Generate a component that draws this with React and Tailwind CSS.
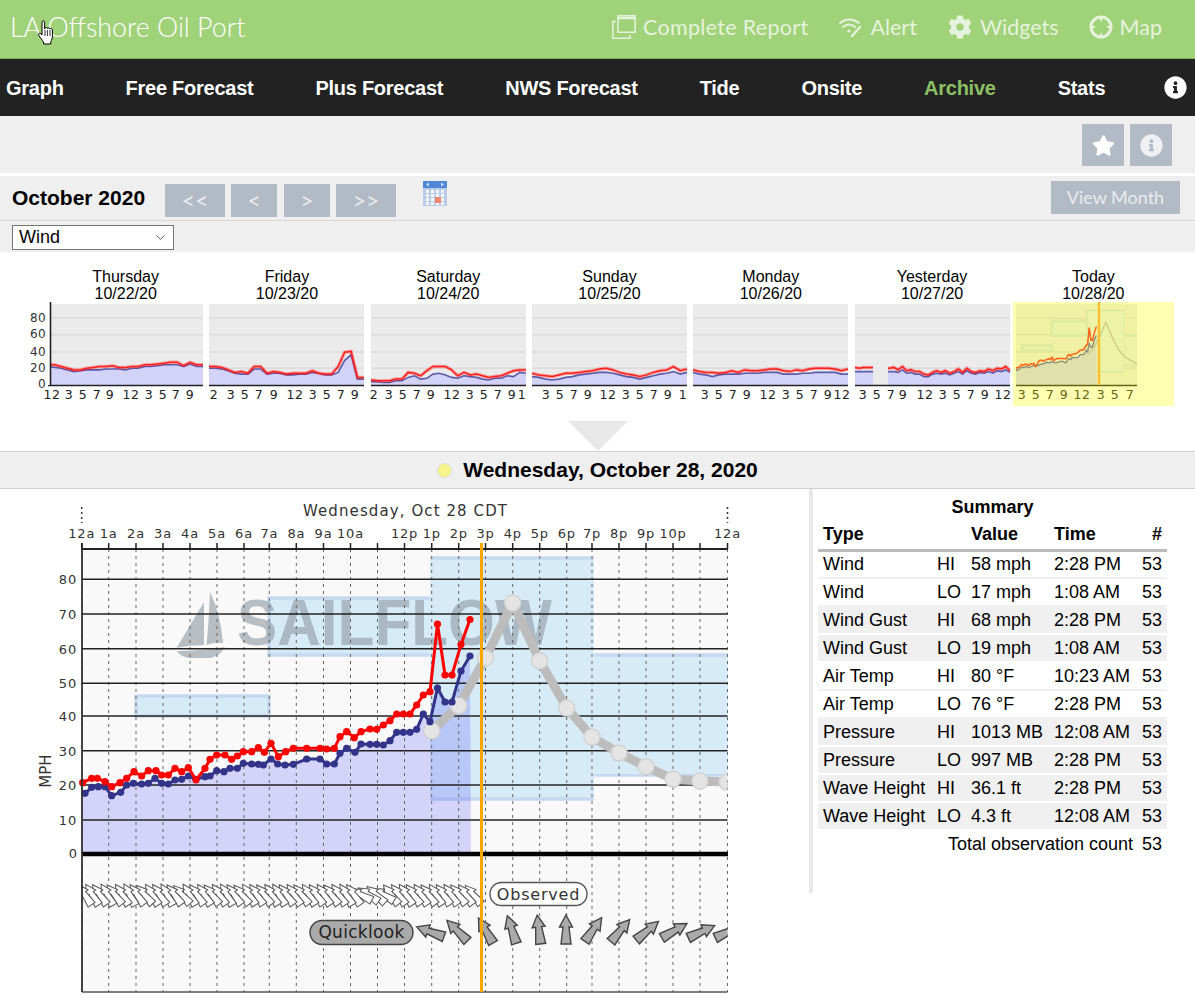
import { ChevronDown } from "lucide-react";
import { FaCog, FaInfoCircle, FaStar } from "react-icons/fa";

const hourX = [81.7, 108.7, 136, 163, 190, 217, 244, 269.3, 296.3, 323.5, 350.5, 377.5, 404.5, 431.7, 458.7, 485.5, 512.7, 539.7, 566.7, 592, 619, 646, 673, 700, 727.5];
const hourLabels = ["12a", "1a", "2a", "3a", "4a", "5a", "6a", "7a", "8a", "9a", "10a", "", "12p", "1p", "2p", "3p", "4p", "5p", "6p", "7p", "8p", "9p", "10p", "", "12a"];
const gridY = [[80, 579.3], [70, 614], [60, 648.7], [50, 683.3], [40, 716], [30, 750.7], [20, 785], [10, 820]];

const fromA = ([x, y]) => [80 + x / 3, 730 + y / 3];
const fromB = ([x, y]) => [255 + x / 3, 690 + y / 3];

const redPts = [
  ...[[8, 158], [35, 145], [52, 145], [75, 155], [95, 170], [120, 158], [140, 145], [162, 125], [185, 138], [205, 122], [228, 122], [245, 135], [265, 135], [285, 115], [305, 125], [325, 113], [348, 150], [375, 115], [390, 88], [410, 75], [435, 75], [455, 88], [472, 78], [490, 65], [515, 65], [535, 53]].map(fromA),
  ...[[28, 187], [48, 160], [70, 200], [92, 185], [115, 175], [155, 175], [195, 175], [215, 177], [238, 175], [255, 140], [275, 125], [298, 143], [318, 125], [345, 117], [365, 118], [385, 105], [405, 92], [425, 72], [445, 72], [465, 72], [485, 45], [505, 15], [525, 5]].map(fromB),
  [437.5, 624], [445, 675], [452, 675], [461, 644.5], [470, 619.5],
];
const bluePts = [
  ...[[15, 190], [35, 172], [55, 170], [75, 170], [95, 197], [122, 187], [140, 165], [160, 160], [185, 162], [205, 160], [225, 145], [245, 160], [265, 162], [285, 150], [305, 148], [325, 138], [348, 148], [375, 140], [390, 138], [410, 122], [432, 125], [450, 115], [472, 115], [490, 100], [515, 102], [535, 103]].map(fromA),
  ...[[25, 225], [48, 207], [68, 222], [90, 225], [115, 223], [155, 207], [195, 207], [215, 222], [238, 222], [255, 190], [275, 175], [300, 187], [318, 162], [345, 163], [365, 163], [385, 165], [405, 152], [425, 127], [445, 127], [465, 127], [485, 118], [505, 72], [525, 95]].map(fromB),
  [437.5, 688], [445, 702], [452, 702], [461, 671], [470, 656],
];
const forecastPts = [[431.7, 731], [458.7, 705.7], [485.5, 658], [512.7, 603], [539.7, 660.7], [566.7, 708], [592, 737], [619, 753], [646, 766.7], [673, 779], [700, 781], [727, 782]];
const blocks = [[136, 696, 133, 20], [269, 598, 163, 57], [269, 655, 0, 41], [432, 558, 160, 241], [592, 655, 135, 120]];

const forecastArrows = [[430.8, 932, -70], [457.5, 931, -45], [486, 931, -30], [512, 930, -18], [539, 930, -7], [566, 930, 0], [593, 930, 35], [620, 931, 40], [647, 931, 50], [674, 931, 60], [701, 932, 65], [728, 932, 65]];
const observedTilt = [-26, -24, -28, -22, -30, -25, -20, -27, -33, -24, -26, -21, -29, -34, -23, -27, -25, -30, -26, -22, -28, -31, -24, -26, -29, -25, -23, -28, -26, -30, -24, -27, -25, -29, -26, -23, -27, -55, -48, -40, -52, -30, -27, -25, -28, -26, -29, -24, -27, -26, -30, -28, -32];

const toPoints = (pts) => pts.map((p) => p.join(",")).join(" ");

const Arrow = ({ x, y, rot, scale = 1, fill, stroke, width = 1.4 }) => (
  <polygon
    transform={`translate(${x} ${y}) rotate(${rot}) scale(${scale})`}
    points="0,-15 6.5,-3 3,-3 5,14 -5,14 -3,-3 -6.5,-3"
    fill={fill}
    stroke={stroke}
    strokeWidth={width}
  />
);

const MainChart = () => (
  <svg width="809" height="504" viewBox="0 489 809 504" className="block" fontFamily="DejaVu Sans">
    <defs>
      <clipPath id="plot-clip">
        <rect x="82" y="549" width="645.5" height="444" />
      </clipPath>
    </defs>
    <rect x="82" y="549" width="645.5" height="443" fill="#f9f9f9" />
    {blocks.map(([x, y, w, h], i) => (
      <rect key={i} x={x} y={y} width={w} height={h} fill="#d7ebf7" stroke="#c6d9ef" strokeWidth="3.5" clipPath="url(#plot-clip)" />
    ))}
    <rect x="592" y="657" width="135" height="117" fill="#d7ebf7" />
    <rect x="430" y="560" width="164" height="237" fill="#d7ebf7" />
    <g opacity="0.62" fill="#8f9ca6">
      <path d="M204 602 L176.7 647.7 Q190 645 204 645 Z" />
      <path d="M210 591.7 Q221 615 223 643 Q214 642 206.5 645 Q209 620 210 591.7 Z" />
      <path d="M176.7 651 Q200 651 225 647 Q220 656 210 658 L190 658 Q181 657 176.7 651 Z" />
      <text x="237" y="645" fontFamily="Liberation Sans" fontWeight="700" fontSize="65" textLength="315" lengthAdjust="spacingAndGlyphs">SAILFLOW</text>
    </g>
    <polygon points={toPoints([[82, 854], [82, bluePts[0][1]], ...bluePts, [471, 854]])} fill="#0000ff" fillOpacity="0.15" />
    {hourX.map((x) => (
      <line key={x} x1={x} x2={x} y1="549" y2="992" stroke="#666" strokeWidth="1" strokeDasharray="3 4" />
    ))}
    {gridY.map(([v, y]) => (
      <line key={v} x1="82" x2="727.5" y1={y} y2={y} stroke="#222" strokeWidth="1.6" />
    ))}
    <g clipPath="url(#plot-clip)">
      <polyline points={toPoints(forecastPts)} fill="none" stroke="#bcbcbc" strokeWidth="9" />
      {forecastPts.map(([x, y]) => (
        <circle key={x} cx={x} cy={y} r="8" fill="#e4e4e4" stroke="#d2d2d2" strokeWidth="1.5" />
      ))}
    </g>
    <polyline points={toPoints(bluePts)} fill="none" stroke="#33338a" strokeWidth="3" />
    {bluePts.map(([x, y], i) => (
      <circle key={i} cx={x} cy={y} r="3.6" fill="#33338a" />
    ))}
    <polyline points={toPoints(redPts)} fill="none" stroke="#ff0000" strokeWidth="3" />
    {redPts.map(([x, y], i) => (
      <circle key={i} cx={x} cy={y} r="3.6" fill="#ff0000" />
    ))}
    <g clipPath="url(#plot-clip)">
      {[...observedTilt].reverse().map((rot, i) => (
        <Arrow key={i} x={85 + (observedTilt.length - 1 - i) * 7.47} y={895} rot={rot - 8} scale={0.84} fill="#fff" stroke="#555" width={1.2} />
      ))}
      {forecastArrows.map(([x, y, rot]) => (
        <Arrow key={x} x={x} y={y} rot={rot} fill="#aaa" stroke="#444" />
      ))}
    </g>
    <line x1="82" x2="728" y1="854" y2="854" stroke="#000" strokeWidth="4.5" />
    <line x1="82" x2="727.5" y1="549" y2="549" stroke="#222" strokeWidth="1.8" />
    <line x1="82" x2="727.5" y1="992" y2="992" stroke="#555" strokeWidth="1.6" />
    <line x1="82" x2="82" y1="543" y2="992" stroke="#333" strokeWidth="1.8" />
    {hourX.map((x) => (
      <line key={x} x1={x} x2={x} y1="543" y2="549" stroke="#222" strokeWidth="1.5" />
    ))}
    {[81.7, 727.5].map((x) => (
      <line key={x} x1={x} x2={x} y1="507" y2="523" stroke="#333" strokeWidth="1.5" strokeDasharray="2 3" />
    ))}
    <text x="405" y="516" textAnchor="middle" fontSize="15" fill="#333" textLength="204">Wednesday, Oct 28 CDT</text>
    {hourLabels.map((label, i) => (
      <text key={i} x={hourX[i]} y="538" textAnchor="middle" fontSize="13" letterSpacing="0.8" fill="#333">{label}</text>
    ))}
    {gridY.map(([v, y]) => (
      <text key={v} x="77" y={y + 5} textAnchor="end" fontSize="13" letterSpacing="0.8" fill="#333">{v}</text>
    ))}
    <text x="77" y="858" textAnchor="end" fontSize="13" fill="#333">0</text>
    <text transform="translate(51 771) rotate(-90)" textAnchor="middle" fontSize="15" fill="#333">MPH</text>
    <rect x="310" y="920.5" width="103" height="24" rx="12" fill="#aaa" stroke="#444" strokeWidth="1.4" />
    <text x="361.5" y="938" textAnchor="middle" fontSize="17" letterSpacing="0.3" fill="#222">Quicklook</text>
    <rect x="490" y="882.5" width="97" height="23" rx="11.5" fill="#fff" stroke="#555" strokeWidth="1.4" />
    <text x="538.5" y="900" textAnchor="middle" fontSize="16" letterSpacing="0.8" fill="#333">Observed</text>
    <line x1="481.5" x2="481.5" y1="543" y2="992" stroke="#ffa500" strokeWidth="3" />
  </svg>
);

const sparkY = (v) => 83 - v * 0.84;

const Spark = ({ red, blue, labels, gapAt }) => {
  const xs = (arr, i) => (i * 155) / (arr.length - 1);
  const line = (arr) => toPoints(arr.map((v, i) => [xs(arr, i).toFixed(1), sparkY(v).toFixed(1)]));
  const area = `0,83 ${line(blue)} 155,83`;
  return (
    <svg width="155" height="104" viewBox="0 0 155 104" className="block overflow-visible" fontFamily="DejaVu Sans">
      <rect x="0" y="2" width="155" height="81" fill="#ebebeb" />
      {[66.3, 50, 32.7, 16].map((y) => (
        <line key={y} x1="0" x2="155" y1={y} y2={y} stroke="#dcdcdc" strokeWidth="1.4" />
      ))}
      <polygon points={area} fill="#d3d3f8" />
      <polyline points={line(blue)} fill="none" stroke="#5b5bab" strokeWidth="1.6" />
      <polyline points={line(red)} fill="none" stroke="#ff0000" strokeOpacity="0.3" strokeWidth="3.5" />
      <polyline points={line(red)} fill="none" stroke="#ff2020" strokeWidth="1.5" />
      {gapAt && <rect x={gapAt[0]} y="60" width={gapAt[1] - gapAt[0]} height="23" fill="#ebebeb" />}
      <line x1="0" x2="155" y1="83.5" y2="83.5" stroke="#222" strokeWidth="1.6" />
      {labels.map(([t, x]) => (
        <text key={x} x={x} y="97" textAnchor="middle" fontSize="12.5" letterSpacing="0.6" fill="#222">{t}</text>
      ))}
    </svg>
  );
};

// today's thumbnail shows 1am to about 8:30pm, so it is zoomed in on the big chart
const TodaySpark = () => {
  const sx = (x) => 86 + (x - 481.5) * 0.2222;
  const sy = (y) => 83 - (854 - y) * 0.25;
  const map = (pts) => toPoints(pts.map(([x, y]) => [sx(x).toFixed(1), sy(y).toFixed(1)]));
  return (
    <svg width="161" height="104" viewBox="0 0 161 104" className="block" fontFamily="DejaVu Sans">
      <defs>
        <clipPath id="today-clip">
          <rect x="3" y="2" width="121" height="81" />
        </clipPath>
      </defs>
      <rect x="3" y="2" width="121" height="81" fill="#ebebeb" />
      {[66.3, 50, 32.7, 16].map((y) => (
        <line key={y} x1="3" x2="124" y1={y} y2={y} stroke="#dcdcdc" strokeWidth="1.4" />
      ))}
      <g clipPath="url(#today-clip)">
        {blocks.map(([x, y, w, h], i) => (
          <rect key={i} x={sx(x)} y={sy(y)} width={w * 0.2222} height={h * 0.25} fill="#e4eef0" stroke="#d3e2e2" strokeWidth="3" />
        ))}
        <rect x={sx(432)} y={sy(560)} width={162 * 0.2222} height={236 * 0.25} fill="#e4eef0" />
        <polygon points={`3,83 ${map(bluePts)} ${sx(471)},83`} fill="#d3d3f8" />
        <polyline points={map(forecastPts)} fill="none" stroke="#bbb" strokeWidth="1.5" />
        <polyline points={map(bluePts)} fill="none" stroke="#5b5bab" strokeWidth="1.3" />
        <polyline points={map(redPts)} fill="none" stroke="#ff2020" strokeWidth="1.5" />
      </g>
      <line x1="3" x2="124" y1="83.5" y2="83.5" stroke="#222" strokeWidth="1.4" />
      {[["3", 9], ["5", 23], ["7", 37], ["9", 51], ["12", 69], ["3", 88], ["5", 102], ["7", 117]].map(([t, x]) => (
        <text key={x} x={x} y="97" textAnchor="middle" fontSize="12.5" letterSpacing="0.6" fill="#222">{t}</text>
      ))}
      <rect x="0" y="0" width="161" height="104" fill="#ffff00" fillOpacity="0.3" />
      <line x1="86" x2="86" y1="0" y2="83" stroke="#f8c030" strokeWidth="2.5" />
    </svg>
  );
};

const days = [
  {
    name: "Thursday", date: "10/22/20",
    red: [24, 24, 22, 20, 18, 18, 20, 21, 22, 22, 23, 21, 21, 22, 22, 24, 24, 25, 26, 27, 27, 23, 27, 24, 24],
    blue: [22, 21, 20, 18, 16, 17, 18, 18, 18, 19, 19, 19, 18, 20, 20, 22, 22, 23, 24, 24, 24, 22, 25, 22, 22],
    labels: [["12", 4], ["3", 21], ["5", 35], ["7", 49], ["9", 62], ["12", 83], ["3", 101], ["5", 115], ["7", 128], ["9", 142]],
  },
  {
    name: "Friday", date: "10/23/20",
    red: [22, 22, 21, 18, 15, 16, 14, 22, 22, 14, 16, 15, 13, 14, 14, 14, 17, 14, 13, 13, 22, 39, 40, 9, 9],
    blue: [20, 20, 19, 17, 14, 13, 13, 19, 19, 13, 14, 14, 12, 12, 13, 13, 15, 14, 12, 12, 15, 29, 36, 7, 7],
    labels: [["2", 5], ["3", 22], ["5", 36], ["7", 50], ["9", 65], ["12", 86], ["3", 104], ["5", 118], ["7", 132], ["9", 146]],
  },
  {
    name: "Saturday", date: "10/24/20",
    red: [6, 5, 5, 5, 7, 7, 15, 14, 11, 17, 22, 22, 22, 18, 11, 15, 12, 13, 11, 9, 10, 11, 14, 17, 18, 18],
    blue: [4, 4, 3, 3, 5, 5, 9, 11, 7, 8, 13, 14, 12, 9, 8, 11, 10, 9, 7, 6, 8, 8, 11, 10, 15, 14],
    labels: [["2", 3], ["3", 18], ["5", 32], ["7", 46], ["9", 60], ["12", 81], ["3", 99], ["5", 113], ["7", 127], ["9", 141], ["1", 151]],
  },
  {
    name: "Sunday", date: "10/25/20",
    red: [14, 12, 11, 10, 12, 14, 14, 15, 16, 17, 19, 20, 18, 15, 13, 12, 10, 12, 15, 17, 18, 22, 17, 19],
    blue: [10, 9, 7, 6, 7, 9, 10, 12, 13, 14, 15, 15, 14, 12, 10, 9, 7, 9, 11, 13, 14, 16, 13, 15],
    labels: [["3", 14], ["5", 28], ["7", 42], ["9", 56], ["12", 76], ["3", 94], ["5", 108], ["7", 122], ["9", 136], ["1", 151]],
  },
  {
    name: "Monday", date: "10/26/20",
    red: [18, 16, 15, 15, 14, 15, 17, 15, 18, 17, 17, 18, 19, 19, 17, 16, 18, 17, 19, 20, 20, 20, 19, 17, 19],
    blue: [15, 13, 12, 10, 12, 13, 13, 13, 14, 14, 14, 15, 15, 15, 13, 13, 13, 14, 14, 15, 15, 15, 15, 13, 13],
    labels: [["3", 12], ["5", 26], ["7", 40], ["9", 54], ["12", 75], ["3", 93], ["5", 107], ["7", 121], ["9", 135], ["12", 149]],
  },
  {
    name: "Yesterday", date: "10/27/20",
    red: [21, 20, 21, 21, 21, 21, 21, 20, 20, 21, 18, 22, 17, 18, 16, 16, 13, 12, 15, 17, 15, 17, 14, 16, 19, 15, 20, 16, 15, 17, 16, 19, 17, 20, 19, 22, 17],
    blue: [16, 16, 16, 16, 16, 16, 16, 16, 16, 16, 15, 18, 14, 15, 13, 13, 10, 10, 13, 14, 13, 14, 12, 14, 16, 13, 17, 14, 13, 15, 14, 16, 14, 17, 16, 18, 15],
    gapAt: [18, 33],
    labels: [["3", 8], ["5", 22], ["7", 36], ["9", 48], ["12", 70], ["3", 88], ["5", 102], ["7", 116], ["9", 130], ["12", 148]],
  },
];

const summaryRows = [
  ["Wind", "HI", "58 mph", "2:28 PM", false],
  ["Wind", "LO", "17 mph", "1:08 AM", false],
  ["Wind Gust", "HI", "68 mph", "2:28 PM", true],
  ["Wind Gust", "LO", "19 mph", "1:08 AM", true],
  ["Air Temp", "HI", "80 °F", "10:23 AM", false],
  ["Air Temp", "LO", "76 °F", "2:28 PM", false],
  ["Pressure", "HI", "1013 MB", "12:08 AM", true],
  ["Pressure", "LO", "997 MB", "2:28 PM", true],
  ["Wave Height", "HI", "36.1 ft", "2:28 PM", true],
  ["Wave Height", "LO", "4.3 ft", "12:08 AM", true],
];

const navItems = ["Graph", "Free Forecast", "Plus Forecast", "NWS Forecast", "Tide", "Onsite", "Archive", "Stats"];

const headerFont = "[font-family:Lato,sans-serif]";

const NavButton = ({ children, className }) => (
  <button className={`h-[33px] bg-[#b2bbc5] text-[23px] leading-[33px] text-[#e8ecf0] ${headerFont} ${className}`}>
    {children}
  </button>
);

const App = () => (
  <div className="relative w-[1195px] h-[1003px] overflow-hidden bg-white [font-family:Liberation_Sans,Arial,sans-serif] text-black">
    <header className="h-[59px] bg-[#a0d27a] border-b border-[#83b35f] flex items-center justify-between pl-[10px] pr-[33px] pb-[4px]">
      <h1 className={`${headerFont} font-light text-[26.8px] text-white`}>LA Offshore Oil Port</h1>
      <nav className={`${headerFont} flex items-center text-[21.5px] text-[#e6f3dc]`}>
        <a className="flex items-center gap-[7px] mr-[31px] tracking-[0.3px]">
          <svg width="24" height="24" viewBox="0 0 24 24" fill="none" stroke="#e6f3dc" strokeWidth="1.5">
            <path d="M6 0.8h17.2v16.4H6z" fill="none" />
            <path d="M6 3h17" strokeWidth="2.5" />
            <path d="M4 6.5H0.8v16.7H18V20" />
          </svg>
          Complete Report
        </a>
        <a className="flex items-center gap-[9px] mr-[31px]">
          <svg width="22" height="21" viewBox="0 0 22 21" fill="none" stroke="#e6f3dc" strokeWidth="2" strokeLinecap="round">
            <path d="M1 6Q10 -1 20 6" />
            <path d="M4 10Q10 5 16 10" />
            <circle cx="10" cy="14" r="1.6" fill="#e6f3dc" stroke="none" />
            <path d="M21 10 L13 19" strokeWidth="2.4" />
          </svg>
          Alert
        </a>
        <a className="flex items-center gap-[8px] mr-[30px]">
          <FaCog size={24} color="#e6f3dc" />
          Widgets
        </a>
        <a className="flex items-center gap-[7px]">
          <svg width="24" height="24" viewBox="0 0 24 24" fill="none" stroke="#e6f3dc">
            <circle cx="12" cy="12" r="10" strokeWidth="3" />
            <path d="M12 1v5M12 18v5M1 12h5M18 12h5" strokeWidth="2" />
          </svg>
          Map
        </a>
      </nav>
    </header>
    <nav className="h-[57px] bg-[#222] flex items-center pl-[6px] gap-[62px] text-[20px] font-bold whitespace-nowrap tracking-[-0.26px] text-white">
      {navItems.map((item) => (
        <a key={item} className={item === "Archive" ? "text-[#8cc063]" : ""}>{item}</a>
      ))}
      <FaInfoCircle size={23} color="#fff" className="ml-[-3px] shrink-0" />
    </nav>
    <div className="h-[57px] bg-[#efefef] flex items-start justify-end gap-[6px] pt-[8px] pr-[23px]">
      <button className="w-[42px] h-[42px] bg-[#b2bbc5] flex items-center justify-center">
        <FaStar size={23} color="#fff" />
      </button>
      <button className="w-[42px] h-[42px] bg-[#b2bbc5] flex items-center justify-center">
        <FaInfoCircle size={23} color="#eef0f3" />
      </button>
    </div>
    <div className="h-[3px] bg-white" />
    <div className="h-[45px] bg-[#efefef] border-b border-[#d8d8d8] flex items-start pl-[12px] pr-[15px]">
      <h2 className="w-[153px] text-[21px] font-bold leading-[23px] pt-[10px]">October 2020</h2>
      <div className="flex gap-[6px] pt-[8px]">
        <NavButton className="w-[60px]">&lt;&lt;</NavButton>
        <NavButton className="w-[46px]">&lt;</NavButton>
        <NavButton className="w-[46px] ml-[1px]">&gt;</NavButton>
        <NavButton className="w-[60px]">&gt;&gt;</NavButton>
      </div>
      <svg width="24" height="25" viewBox="0 0 24 25" className="ml-[27px] mt-[5px]">
        <rect width="24" height="25" fill="#b9cde6" />
        <rect width="24" height="7" fill="#4f86d8" />
        <path d="M3 3.5l3-2v4zM21 3.5l-3-2v4z" fill="#cfe0f7" />
        {[9, 13, 17, 21].map((y) =>
          [3, 8, 13, 18].map((x) => <rect key={`${x}-${y}`} x={x} y={y} width="3" height="3" fill="#f4f6fa" />)
        )}
        <rect x="12" y="16" width="6" height="6" fill="#ee8a70" />
      </svg>
      <button className={`ml-auto mt-[5px] w-[129px] h-[33px] bg-[#b2bbc5] text-[18px] text-[#e8ecf0] ${headerFont}`}>View Month</button>
    </div>
    <div className="h-[31px] bg-[#efefef] pl-[12px] pt-[4px]">
      <div className="relative w-[162px]">
        <select className="block w-full h-[25px] appearance-none bg-white border border-[#767676] text-[18px] leading-[20px] pl-[6px] pb-[2px]" defaultValue="Wind">
          <option>Wind</option>
        </select>
        <ChevronDown size={15} strokeWidth={1.3} color="#333" className="absolute right-[6px] top-[5px]" />
      </div>
    </div>
    <section className="grid grid-cols-7 pl-[45px] pr-[21px] pt-[16px]">
      {days.map((day, i) => (
        <div key={day.name} className="flex flex-col items-center text-[16px] leading-[17px]">
          <span>{day.name}</span>
          <span>{day.date}</span>
          <div className="relative">
            <Spark {...day} />
            {i === 0 && (
              <svg width="28" height="90" viewBox="0 0 28 90" className="absolute left-[-24px] top-0" fontFamily="DejaVu Sans">
                {[["80", 20], ["60", 36], ["40", 54], ["20", 70], ["0", 86]].map(([t, y]) => (
                  <text key={t} x="22" y={y} textAnchor="end" fontSize="12" letterSpacing="0.4" fill="#333">{t}</text>
                ))}
                <rect x="24" y="0" width="2.5" height="83" fill="#fff" />
                <line x1="26.5" x2="26.5" y1="0" y2="84" stroke="#222" strokeWidth="1.6" />
              </svg>
            )}
          </div>
        </div>
      ))}
      <div className="flex flex-col items-center text-[16px] leading-[17px]">
        <span>Today</span>
        <span>10/28/20</span>
        <TodaySpark />
      </div>
    </section>
    <div className="flex justify-center mt-[15px]">
      <div className="w-0 h-0 border-l-[30px] border-r-[30px] border-t-[30px] border-l-transparent border-r-transparent border-t-[#e8e8e8]" />
    </div>
    <div className="h-[38px] bg-[#efefef] border-y border-[#d0d0d0] flex items-center justify-center gap-[11px]">
      <span className="w-[15px] h-[15px] rounded-full bg-[#f5f58c] border border-[#ddd]" />
      <span className="text-[21px] font-bold">Wednesday, October 28, 2020</span>
    </div>
    <main className="flex">
      <MainChart />
      <aside className="w-[358px] h-[404px] border-l-4 border-[#e8e8e8] pl-[5px] pt-[6px]">
        <table className="w-[349px] table-fixed text-[18px] leading-[21px]">
          <colgroup>
            <col className="w-[115px]" />
            <col className="w-[34px]" />
            <col className="w-[83px]" />
            <col className="w-[88px]" />
            <col className="w-[29px]" />
          </colgroup>
          <thead>
            <tr>
              <th colSpan={5} className="text-center font-bold h-[25px]">Summary</th>
            </tr>
            <tr className="border-b-[3px] border-[#bbb] h-[30px] text-left font-bold">
              <th className="pl-[5px] font-bold">Type</th>
              <th />
              <th className="pl-[4px] font-bold">Value</th>
              <th className="pl-[4px] font-bold">Time</th>
              <th className="pr-[5px] text-right font-bold">#</th>
            </tr>
          </thead>
          <tbody>
            {summaryRows.map(([type, level, value, time, shaded], i) => (
              <tr key={i} className={`h-[28px] border-b-2 ${shaded ? "bg-[#f0f0f0] border-white" : "border-[#f0f0f0]"}`}>
                <td className="pl-[5px] whitespace-nowrap">{type}</td>
                <td className="pl-[4px]">{level}</td>
                <td className="pl-[4px] whitespace-nowrap">{value}</td>
                <td className="pl-[4px] whitespace-nowrap">{time}</td>
                <td className="pl-[4px]">53</td>
              </tr>
            ))}
            <tr className="h-[28px]">
              <td colSpan={4} className="text-right pr-[5px]">Total observation count</td>
              <td className="pl-[4px]">53</td>
            </tr>
          </tbody>
        </table>
      </aside>
    </main>
    <svg width="18" height="25" viewBox="0 0 18 25" className="absolute left-[37px] top-[20px]">
      <path d="M5 2.2c0-1.7 2.6-1.7 2.6 0V9l.4-1c.6-1 2.3-.8 2.4.5.4-1 2.2-.9 2.4.5.6-.8 2.4-.6 2.6.8v6c0 2.5-.6 4-1.6 6v2.2H6.6v-2c-1.6-1.8-3-4-5-7-.7-1.2.9-2.5 2.2-1.4L5 15z" fill="#fff" stroke="#000" strokeWidth="1" strokeLinejoin="round" />
      <path d="M8 10v6M10.4 10v6M13 10v6" stroke="#000" strokeWidth="0.8" />
    </svg>
  </div>
);

export default App;
